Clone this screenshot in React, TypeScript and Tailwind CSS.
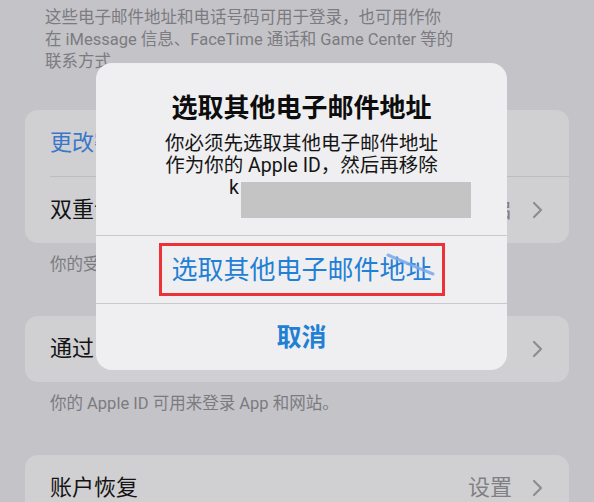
import React from "react"

const Chevron = () => (
  <svg width="11" height="18" viewBox="0 0 11 18" className="shrink-0">
    <polyline points="2,2 9,9 2,16" fill="none" stroke="#8d8d91" strokeWidth="2.2" strokeLinecap="round" strokeLinejoin="round" />
  </svg>
)

const Row = ({ label, value, blue, chevron }: { label: string; value?: string; blue?: boolean; chevron?: boolean }) => (
  <div className="flex items-center h-[66px] pl-[25px] pr-[26px]">
    <span className={`flex-1 text-[22px] leading-none ${blue ? "text-[#3a76c9]" : "text-[#141414]"}`}>{label}</span>
    {value && <span className="text-[22px] leading-none text-[#808084] mr-[20px]">{value}</span>}
    {chevron && <Chevron />}
  </div>
)

export default function App() {
  return (
    <div className="relative w-[594px] h-[502px] overflow-hidden bg-[#c4c3c8] font-[Roboto,'Noto_Sans_CJK_SC',sans-serif]">
      {/* dimmed settings page */}
      <div className="pt-[7px]">
        <p className="px-[45px] text-[16.5px] leading-[22px] text-[#7b7b80]">
          这些电子邮件地址和电话号码可用于登录，也可用作你<br />
          在 iMessage 信息、FaceTime 通话和 Game Center 等的<br />
          联系方式
        </p>

        <div className="mx-[25px] mt-[37px] rounded-[13px] bg-[#d0d0d2]">
          <Row label="更改密码" blue />
          <div className="ml-[25px] h-px bg-[#bdbdc1]" />
          <Row label="双重认证" value="已开启" chevron />
        </div>
        <p className="px-[50px] mt-[11px] text-[16.5px] leading-[22px] text-[#7b7b80]">你的受信任电话号码用于验证你的身份</p>

        <div className="mx-[25px] mt-[40px] rounded-[13px] bg-[#d0d0d2]">
          <Row label="通过 Apple 登录" chevron />
        </div>
        <p className="px-[50px] mt-[11px] text-[16.5px] leading-[22px] text-[#7b7b80]">你的 Apple ID 可用来登录 App 和网站。</p>

        <div className="mx-[25px] mt-[40px] rounded-[13px] bg-[#d0d0d2]">
          <Row label="账户恢复" value="设置" chevron />
        </div>
      </div>

      {/* alert */}
      <div className="absolute left-[96px] top-[63px] w-[411px] h-[307px] rounded-[16px] bg-[#efeff1] flex flex-col">
        <h2 className="mt-[29px] text-center text-[26px] leading-[32px] font-bold text-[#0d0d0d]">选取其他电子邮件地址</h2>
        <div className="mt-[9px] text-center text-[19.5px] leading-[22px] text-[#151515]">
          <div>你必须先选取其他电子邮件地址</div>
          <div>作为你的 Apple ID，然后再移除</div>
          <div className="relative h-[22px] text-left">
            <span className="ml-[133px]">k</span>
            <div className="absolute left-[145px] top-[5px] w-[230px] h-[36px] bg-[#c4c4c4]" />
          </div>
        </div>
        <div className="mt-[36px] h-px bg-[#c9c9cd]" />
        <div className="relative h-[67px] flex items-center justify-center">
          <div className="w-[286px] h-[53px] border-[3px] border-[#ec3237] flex items-center justify-center">
            <span className="text-[26px] leading-none text-[#1f80d6]">选取其他电子邮件地址</span>
          </div>
          <svg className="absolute left-[290px] top-[17px]" width="50" height="24" viewBox="0 0 50 24">
            <path d="M2 2 C 16 8, 30 14, 47 21" fill="none" stroke="#7aa7ec" strokeWidth="3" strokeLinecap="round" opacity="0.85" />
          </svg>
        </div>
        <div className="h-px bg-[#c9c9cd]" />
        <div className="flex-1 flex items-center justify-center">
          <span className="text-[25px] leading-none font-bold text-[#1f80d6]">取消</span>
        </div>
      </div>
    </div>
  )
}
